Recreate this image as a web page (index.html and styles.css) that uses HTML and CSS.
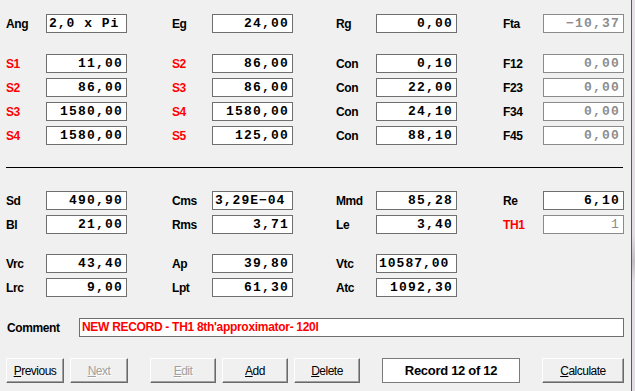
FILE: index.html
```html
<!DOCTYPE html>
<html lang="en">
<head>
    <meta charset="UTF-8">
    <meta name="viewport" content="width=device-width, initial-scale=1.0">
    <title>Record 12 of 12</title>
    <link rel="stylesheet" href="styles.css">
</head>
<body>
<div class="window">
    <div class="form">
        <div class="grid">
            <div class="field"><span class="lbl">Ang</span><div class="box left">2,0 x Pi</div></div>
            <div class="field"><span class="lbl">Eg</span><div class="box">24,00</div></div>
            <div class="field"><span class="lbl">Rg</span><div class="box">0,00</div></div>
            <div class="field"><span class="lbl">Fta</span><div class="box off">&minus;10,37</div></div>
        </div>

        <div class="grid sec">
            <div class="field"><span class="lbl red">S1</span><div class="box">11,00</div></div>
            <div class="field"><span class="lbl red">S2</span><div class="box">86,00</div></div>
            <div class="field"><span class="lbl">Con</span><div class="box">0,10</div></div>
            <div class="field"><span class="lbl">F12</span><div class="box off">0,00</div></div>

            <div class="field"><span class="lbl red">S2</span><div class="box">86,00</div></div>
            <div class="field"><span class="lbl red">S3</span><div class="box">86,00</div></div>
            <div class="field"><span class="lbl">Con</span><div class="box">22,00</div></div>
            <div class="field"><span class="lbl">F23</span><div class="box off">0,00</div></div>

            <div class="field"><span class="lbl red">S3</span><div class="box">1580,00</div></div>
            <div class="field"><span class="lbl red">S4</span><div class="box">1580,00</div></div>
            <div class="field"><span class="lbl">Con</span><div class="box">24,10</div></div>
            <div class="field"><span class="lbl">F34</span><div class="box off">0,00</div></div>

            <div class="field"><span class="lbl red">S4</span><div class="box">1580,00</div></div>
            <div class="field"><span class="lbl red">S5</span><div class="box">125,00</div></div>
            <div class="field"><span class="lbl">Con</span><div class="box">88,10</div></div>
            <div class="field"><span class="lbl">F45</span><div class="box off">0,00</div></div>
        </div>

        <div class="rule"></div>

        <div class="grid after-rule">
            <div class="field"><span class="lbl">Sd</span><div class="box">490,90</div></div>
            <div class="field"><span class="lbl">Cms</span><div class="box left">3,29E&minus;04</div></div>
            <div class="field"><span class="lbl">Mmd</span><div class="box">85,28</div></div>
            <div class="field"><span class="lbl">Re</span><div class="box">6,10</div></div>

            <div class="field"><span class="lbl">Bl</span><div class="box">21,00</div></div>
            <div class="field"><span class="lbl">Rms</span><div class="box">3,71</div></div>
            <div class="field"><span class="lbl">Le</span><div class="box">3,40</div></div>
            <div class="field"><span class="lbl red">TH1</span><div class="box off thin">1</div></div>
        </div>

        <div class="grid sec-b">
            <div class="field"><span class="lbl">Vrc</span><div class="box">43,40</div></div>
            <div class="field"><span class="lbl">Ap</span><div class="box">39,80</div></div>
            <div class="field"><span class="lbl">Vtc</span><div class="box left">10587,00</div></div>
            <div></div>

            <div class="field"><span class="lbl">Lrc</span><div class="box">9,00</div></div>
            <div class="field"><span class="lbl">Lpt</span><div class="box">61,30</div></div>
            <div class="field"><span class="lbl">Atc</span><div class="box">1092,30</div></div>
            <div></div>
        </div>

        <div class="comment-row">
            <span class="lbl comment-lbl">Comment</span>
            <div class="comment">NEW RECORD - TH1 8th'approximator- 120l</div>
        </div>

        <div class="buttons">
            <button class="btn"><u>P</u>revious</button>
            <button class="btn off"><u>N</u>ext</button>
            <button class="btn wide off gap"><u>E</u>dit</button>
            <button class="btn wide"><u>A</u>dd</button>
            <button class="btn wide"><u>D</u>elete</button>
            <div class="record gap">Record 12 of 12</div>
            <button class="btn calc gap"><u>C</u>alculate</button>
        </div>
    </div>
    <div class="edge"></div>
</div>
</body>
</html>
```

FILE: styles.css
```css
body {
    margin: 0;
    width: 635px;
    height: 391px;
    overflow: hidden;
    background-color: #f0f0f0;
    font-family: "Liberation Sans", Arial, sans-serif;
}
.window {
    display: flex;
    width: 635px;
    height: 391px;
}
.form {
    box-sizing: border-box;
    flex: 0 0 631px;
    width: 631px;
    padding: 14px 7px 0 6px;
}
.edge {
    box-sizing: border-box;
    flex: 0 0 4px;
    border-left: 1px solid #5a5a5a;
    background: linear-gradient(#e8e0e8, #e4dce4 60%, #c4bcc4 67%, #e4dce4 72%);
}
.grid {
    display: grid;
    grid-template-columns: 166px 164px 167px 121px;
    grid-auto-rows: 19px;
    row-gap: 5px;
}
.sec { margin-top: 21px; }
.after-rule { margin-top: 23px; }
.sec-b { margin-top: 20px; }
.rule {
    width: 617px;
    margin-top: 22px;
    border-top: 1px solid #000;
}
.field {
    display: flex;
    align-items: center;
    width: 121px;
}
.lbl {
    flex: 1;
    font-size: 12px;
    font-weight: bold;
    letter-spacing: -0.4px;
    color: #000;
}
.lbl.red { color: #ff0000; }
.box {
    box-sizing: border-box;
    width: 81px;
    height: 19px;
    background: #fff;
    border: 1px solid #6f6f6f;
    padding: 0 3px 0 3px;
    font-family: "Liberation Mono", "Courier New", monospace;
    font-size: 13px;
    font-weight: bold;
    letter-spacing: 1.2px;
    line-height: 17px;
    text-align: right;
    color: #000;
    white-space: nowrap;
    overflow: hidden;
}
.box.left {
    text-align: left;
    padding-left: 2px;
    letter-spacing: 1px;
}
.box.off {
    color: #8c8c8c;
    border-color: #8a8a8a;
}
.box.thin { font-weight: normal; }
.comment-row {
    display: flex;
    align-items: center;
    margin-top: 21px;
    height: 19px;
}
.comment-lbl {
    flex: 0 0 72px;
    padding-left: 1px;
}
.comment {
    box-sizing: border-box;
    flex: 0 0 545px;
    height: 19px;
    background: #fff;
    border: 1px solid #6f6f6f;
    padding-left: 2px;
    font-size: 12px;
    font-weight: bold;
    letter-spacing: -0.3px;
    line-height: 17px;
    color: #ff0000;
    white-space: nowrap;
}
.buttons {
    display: flex;
    margin-top: 21px;
    gap: 6px;
}
.btn {
    box-sizing: border-box;
    flex: 0 0 58px;
    height: 25px;
    padding: 0;
    background: #f0f0f0;
    border: 1px solid;
    border-color: #fff #696969 #696969 #fff;
    box-shadow: inset -1px -1px #a0a0a0;
    font-family: "Liberation Sans", Arial, sans-serif;
    font-size: 12px;
    letter-spacing: -0.5px;
    color: #000;
}
.btn.wide { flex-basis: 66px; }
.btn.calc { flex-basis: 82px; }
.btn.off {
    color: #a0a0a0;
    text-shadow: 1px 1px #fff;
}
.gap { margin-left: 16px; }
.record {
    box-sizing: border-box;
    flex: 0 0 138px;
    height: 25px;
    background: #fff;
    border: 1px solid #7a7a7a;
    font-size: 13px;
    font-weight: bold;
    letter-spacing: -0.3px;
    line-height: 23px;
    text-align: center;
}
```
